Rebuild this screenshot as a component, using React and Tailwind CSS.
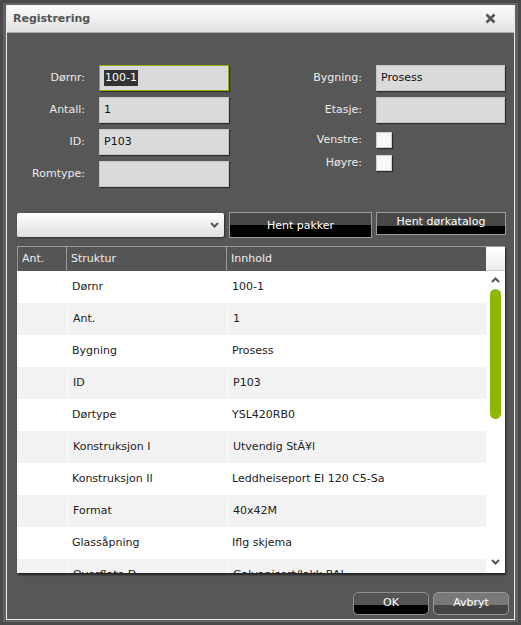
import React from "react";

const rows = [
  ["Dørnr", "100-1"],
  ["Ant.", "1"],
  ["Bygning", "Prosess"],
  ["ID", "P103"],
  ["Dørtype", "YSL420RB0"],
  ["Konstruksjon I", "Utvendig StÃ¥l"],
  ["Konstruksjon II", "Leddheiseport EI 120 C5-Sa"],
  ["Format", "40x42M"],
  ["Glassåpning", "Iflg skjema"],
  ["Overflate D", "Galvanisert/lakk RAL"],
];

function Field({ label, value, active, labelW, inputW }) {
  return (
    <div className="flex items-center h-[26px]">
      <div className="text-right text-[#ececec] pr-[14px]" style={{ width: labelW }}>
        {label}:
      </div>
      <div
        className={
          "h-[26px] flex items-center px-[4px] bg-[#dadada] text-[#111] shadow-[1px_1px_1px_rgba(0,0,0,0.45)] " +
          (active ? "border border-[#8ab800]" : "border border-[#c4c4c4]")
        }
        style={{ width: inputW }}
      >
        {active ? <span className="bg-[#333] text-white px-[1px]">{value}</span> : value}
      </div>
    </div>
  );
}

function Check({ label }) {
  return (
    <div className="flex items-center h-[16px]">
      <div className="w-[114px] text-right text-[#ececec] pr-[14px]">{label}:</div>
      <div className="w-[16px] h-[16px] bg-[#f7f7f7] border border-[#cfcfcf] shadow-[1px_1px_1px_rgba(0,0,0,0.5)]" />
    </div>
  );
}

function Chevron({ up }) {
  return (
    <svg width="9" height="6" viewBox="0 0 9 6">
      <path
        d={up ? "M1 5 L4.5 1.5 L8 5" : "M1 1 L4.5 4.5 L8 1"}
        fill="none"
        stroke="#555"
        strokeWidth="2"
      />
    </svg>
  );
}

export default function App() {
  return (
    <div className="w-[521px] h-[625px] bg-[#4a4a4a] p-[3px] font-['DejaVu_Sans',sans-serif] text-[11px]">
      <div className="w-full h-full bg-[#626262] pt-[2px] pb-[3px] px-[3px]">
        <div className="w-[509px] h-[615px] flex flex-col border-x border-b border-[#ececec] bg-[#575757]">
          <div className="h-[28px] flex items-center justify-between px-[6px] bg-gradient-to-b from-[#fbfbfb] to-[#e2e2e2] border-b border-[#a9a9a9]">
            <span className="font-bold text-[#555] text-[11px] mt-[1px]">Registrering</span>
            <svg width="11" height="11" viewBox="0 0 11 11" className="mr-[12px]">
              <path d="M1.5 1.5 L9.5 9.5 M9.5 1.5 L1.5 9.5" stroke="#555" strokeWidth="2.6" />
            </svg>
          </div>

          <div className="flex pt-[32px]">
            <div className="flex flex-col gap-[6px]">
              <Field label="Dørnr" value="100-1" active labelW={92} inputW={130} />
              <Field label="Antall" value="1" labelW={92} inputW={130} />
              <Field label="ID" value="P103" labelW={92} inputW={130} />
              <Field label="Romtype" value="" labelW={92} inputW={130} />
            </div>
            <div className="flex flex-col gap-[6px] ml-[33px]">
              <Field label="Bygning" value="Prosess" labelW={114} inputW={129} />
              <Field label="Etasje" value="" labelW={114} inputW={129} />
              <div className="flex flex-col gap-[7px] mt-[3px]">
                <Check label="Venstre" />
                <Check label="Høyre" />
              </div>
            </div>
          </div>

          <div className="flex items-start mt-[25px] ml-[10px]">
            <div className="mt-[1px] w-[207px] h-[24px] rounded-[2px] bg-gradient-to-b from-white to-[#dedede] shadow-[1px_1px_2px_rgba(0,0,0,0.5)] flex items-center justify-end pr-[5px]">
              <Chevron />
            </div>
            <button className="ml-[5px] w-[143px] h-[26px] border border-[#9a9a9a] bg-[linear-gradient(#484848_0,#484848_50%,#000_50%,#000_100%)] text-white pt-[2px]">
              Hent pakker
            </button>
            <button className="ml-[4px] w-[130px] h-[23px] border border-[#9a9a9a] bg-[linear-gradient(#484848_0,#484848_62%,#000_62%,#000_100%)] text-white pb-[2px]">
              Hent dørkatalog
            </button>
          </div>

          <div className="mt-[8px] ml-[10px] w-[488px] h-[327px] flex flex-col bg-white shadow-[1px_2px_2px_rgba(0,0,0,0.6)] overflow-hidden">
            <div className="h-[25px] flex shrink-0 border-t border-[#9a9a9a]">
              <div className="w-[50px] border-l border-r border-[#9a9a9a] bg-[#555] text-[#eee] flex items-center pl-[4px]">Ant.</div>
              <div className="w-[160px] border-r border-[#9a9a9a] bg-[#555] text-[#eee] flex items-center pl-[4px]">Struktur</div>
              <div className="w-[259px] bg-[#555] text-[#eee] flex items-center pl-[4px]">Innhold</div>
              <div className="flex-1 bg-gradient-to-b from-white to-[#ececec] border-b border-[#ccc]" />
            </div>
            <div className="flex flex-1 overflow-hidden">
              <div className="w-[469px] flex flex-col">
                {rows.map(([k, v], i) => (
                  <div
                    key={k}
                    className={"h-[32px] shrink-0 flex items-center text-[#222] " + (i % 2 ? "bg-[#f2f2f2]" : "bg-white")}
                  >
                    <div className="w-[50px] h-[24px]" />
                    <div className={"w-[160px] h-[24px] flex items-center pl-[5px] " + (i % 2 ? "border-l border-white" : "")}>{k}</div>
                    <div className={"flex-1 h-[24px] flex items-center pl-[5px] " + (i % 2 ? "border-l border-white" : "")}>{v}</div>
                  </div>
                ))}
              </div>
              <div className="flex-1 flex flex-col items-center bg-white">
                <div className="h-[12px] flex items-end">
                  <Chevron up />
                </div>
                <div className="mt-[6px] w-[11px] h-[130px] rounded-full bg-[#8cb800]" />
                <div className="flex-1" />
                <div className="h-[14px] flex items-start">
                  <Chevron />
                </div>
              </div>
            </div>
          </div>

          <div className="flex justify-end gap-[4px] mt-[19px] pr-[5px]">
            <button className="w-[76px] h-[23px] rounded-[5px] border border-[#8f8f8f] bg-[linear-gradient(#555_0,#555_57%,#000_57%,#000_100%)] text-white">
              OK
            </button>
            <button className="w-[76px] h-[23px] rounded-[5px] border border-[#9a9a9a] bg-[linear-gradient(#787878_0,#787878_57%,#444_57%,#444_100%)] text-white">
              Avbryt
            </button>
          </div>
        </div>
      </div>
    </div>
  );
}
